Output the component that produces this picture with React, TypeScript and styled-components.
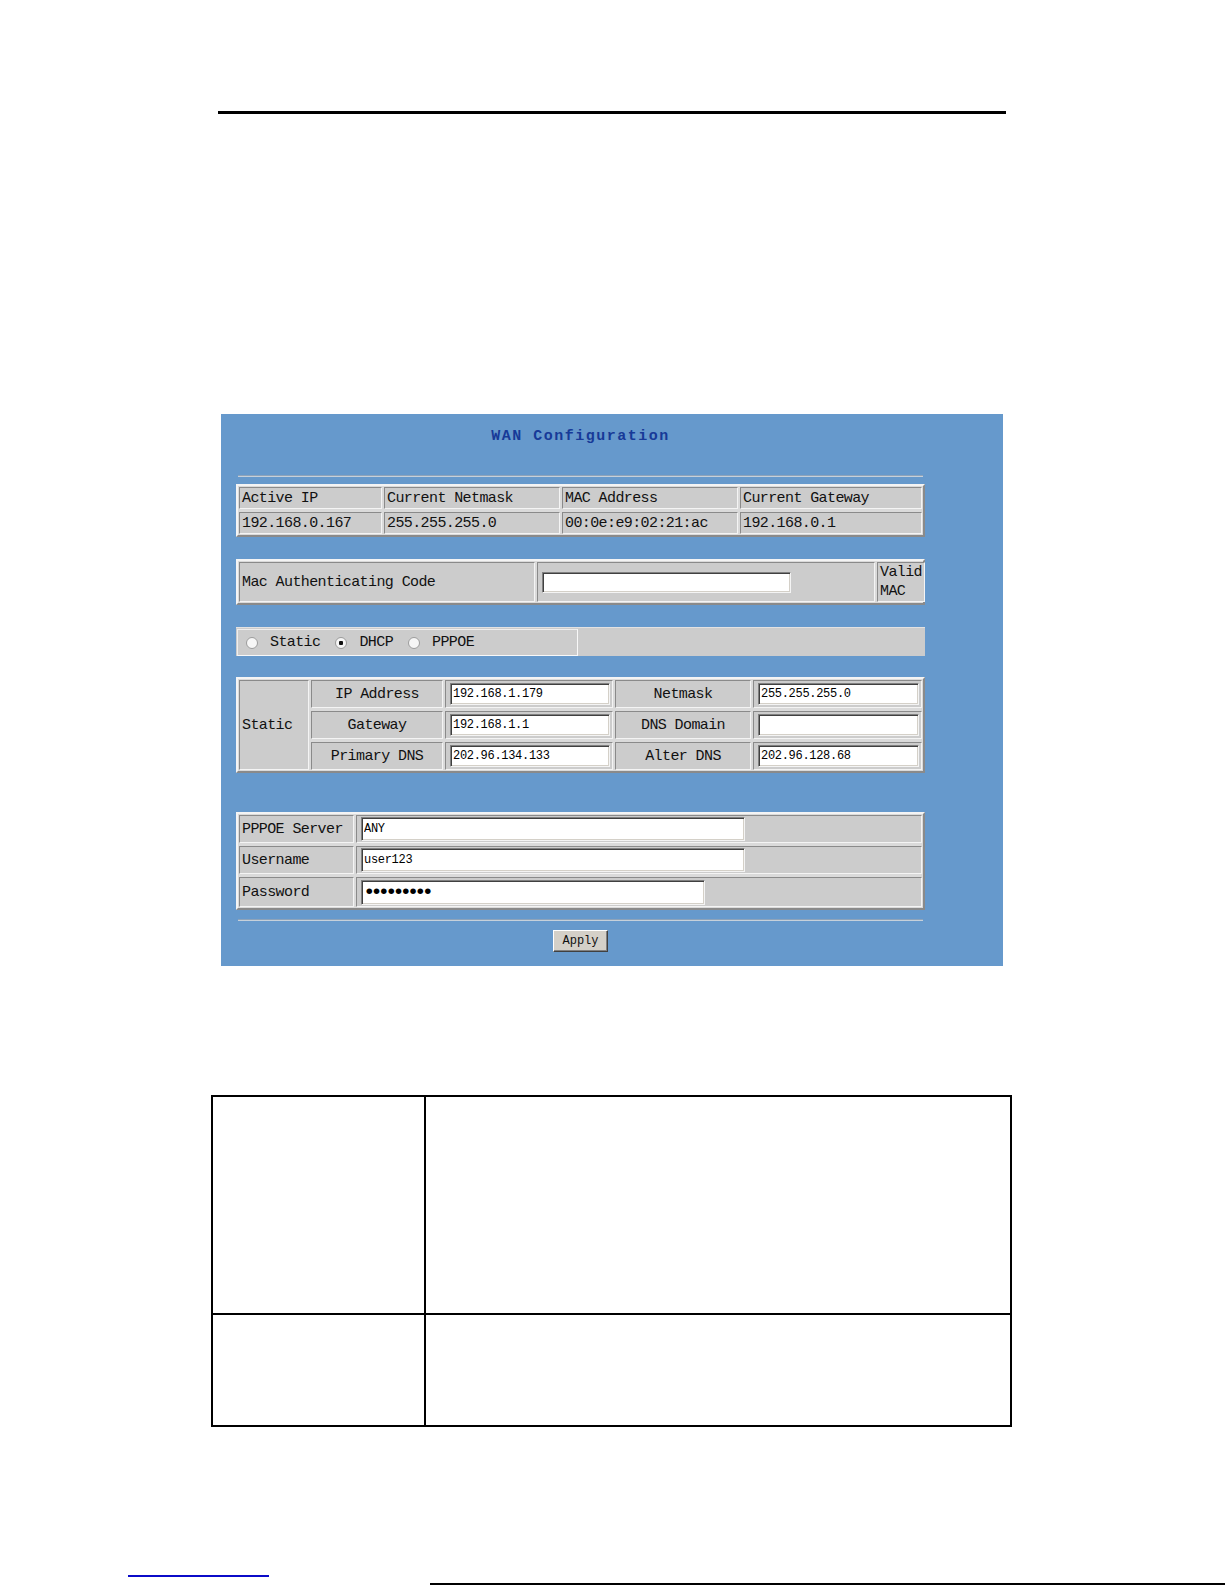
import React, { useState } from 'react';
import styled, { createGlobalStyle, css } from 'styled-components';

const GlobalStyle = createGlobalStyle`
  html, body {
    margin: 0;
    padding: 0;
    background: #ffffff;
  }
  * {
    box-sizing: border-box;
  }
`;

const mono = `"Liberation Mono", "Noto Sans CJK SC", monospace`;

const Page = styled.div`
  width: 1225px;
  height: 1585px;
  overflow: hidden;
  background: #ffffff;
  font-family: ${mono};
  display: flex;
  flex-direction: column;
`;

const HeaderRule = styled.div`
  margin: 111px 0 0 218px;
  width: 788px;
  height: 3px;
  background: #000000;
`;

const Panel = styled.div`
  margin: 300px 0 0 221px;
  width: 782px;
  height: 552px;
  background: #6699cc;
  padding: 13px 0 0 15px;
`;

const Content = styled.div`
  width: 689px;
  display: flex;
  flex-direction: column;
`;

const Title = styled.h2`
  margin: 0;
  height: 20px;
  line-height: 20px;
  text-align: center;
  font-family: ${mono};
  font-size: 15px;
  font-weight: bold;
  letter-spacing: 1.5px;
  color: #173a98;
`;

const Divider = styled.div<{ $top: number }>`
  margin: ${p => p.$top}px 0 0 2px;
  width: 685px;
  height: 2px;
  border-top: 1px solid #8da3ba;
  border-bottom: 1px solid #c6d0da;
`;

// raised frame around every table block
const Frame = styled.div<{ $top: number }>`
  margin-top: ${p => p.$top}px;
  width: 689px;
  display: grid;
  padding: 1px;
  background: #dadada;
  border: 2px solid;
  border-color: #f4f4f4 #8a8a8a #8a8a8a #f4f4f4;
`;

const InfoGrid = styled(Frame)`
  grid-template-columns: 143px 176px 176px 1fr;
  grid-template-rows: 22px 22px;
  gap: 3px 2px;
`;

const MacGrid = styled(Frame)`
  grid-template-columns: 296px 338px 1fr;
  grid-template-rows: 40px;
  gap: 2px;
`;

const StaticGrid = styled(Frame)`
  grid-template-columns: 70px 132px 168px 136px 1fr;
  grid-template-rows: 28px 28px 28px;
  gap: 3px 2px;
`;

const PppoeGrid = styled(Frame)`
  grid-template-columns: 115px 1fr;
  grid-template-rows: 28px 28px 30px;
  gap: 3px 2px;
`;

const Cell = styled.div<{ $align?: 'left' | 'center'; $rows?: number }>`
  background: #cccccc;
  border: 1px solid;
  border-color: #8a8a8a #f4f4f4 #f4f4f4 #8a8a8a;
  display: flex;
  align-items: center;
  justify-content: ${p => (p.$align === 'center' ? 'center' : 'flex-start')};
  padding: 0 2px;
  font-family: ${mono};
  font-size: 15px;
  letter-spacing: -0.6px;
  color: #111111;
  white-space: nowrap;
  ${p =>
    p.$rows &&
    css`
      grid-row: 1 / span ${p.$rows};
    `}
`;

const StackCell = styled(Cell)`
  flex-direction: column;
  align-items: flex-start;
  justify-content: center;
  line-height: 19px;
`;

const TextBox = styled.input<{ $width: number; $height?: number }>`
  width: ${p => p.$width}px;
  height: ${p => p.$height ?? 22}px;
  margin-left: 2px;
  padding: 0 2px;
  background: #ffffff;
  border: 1px solid;
  border-color: #808080 #f4f4f4 #f4f4f4 #808080;
  box-shadow: inset 1px 1px 0 #404040, inset -1px -1px 0 #d4d0c8;
  font-family: ${mono};
  font-size: 12px;
  letter-spacing: -0.3px;
  color: #000000;
  outline: none;
`;

// masked characters drawn as large round dots
const PasswordBox = styled(TextBox)`
  font-size: 21px;
  letter-spacing: -5.3px;
  padding-left: 1px;
`;

const ModeBar = styled.div`
  margin-top: 22px;
  width: 689px;
  height: 29px;
  background: #cccccc;
  border-top: 1px solid #e2e2e2;
  display: flex;
  align-items: stretch;
  padding: 1px 0 0 1px;
`;

const ModeGroup = styled.div`
  width: 341px;
  border: 1px solid;
  border-color: #eeeeee #f8f8f8 #f8f8f8 #eeeeee;
  display: flex;
  align-items: center;
  padding-left: 8px;
  gap: 15px;
`;

const ModeOption = styled.label`
  display: flex;
  align-items: center;
  gap: 12px;
  font-family: ${mono};
  font-size: 15px;
  letter-spacing: -0.6px;
  color: #111111;
`;

const Radio = styled.input`
  appearance: none;
  margin: 0;
  width: 12px;
  height: 12px;
  border-radius: 50%;
  border: 1px solid #9c9c9c;
  background: #f6f6f6;

  &:checked {
    background: radial-gradient(circle, #111111 0 2px, #f6f6f6 2.5px);
  }
`;

const ButtonRow = styled.div`
  margin-top: 9px;
  display: flex;
  justify-content: center;
`;

const ApplyButton = styled.button`
  width: 55px;
  height: 22px;
  padding: 0;
  background: #d4d0c8;
  border: 1px solid;
  border-color: #ffffff #404040 #404040 #ffffff;
  box-shadow: inset -1px -1px 0 #808080;
  font-family: ${mono};
  font-size: 12px;
  color: #111111;
`;

const DocTable = styled.div`
  margin: 129px 0 0 211px;
  width: 801px;
  height: 332px;
  display: grid;
  grid-template-columns: 213px 1fr;
  grid-template-rows: 218px 1fr;
  border: 1px solid #000000;
  border-width: 2px 2px 1px 2px;
`;

const DocCell = styled.div<{ $right?: boolean; $bottom?: boolean }>`
  border-right: ${p => (p.$right ? '0' : '2px solid #000000')};
  border-bottom: ${p => (p.$bottom ? '1px solid #000000' : '2px solid #000000')};
`;

const LinkRule = styled.div`
  margin: 148px 0 0 128px;
  width: 141px;
  height: 2px;
  background: #0b0bc8;
`;

const PageEdge = styled.div`
  margin: 6px 0 0 430px;
  width: 795px;
  height: 2px;
  background: #000000;
`;

const infoHeaders = ['Active IP', 'Current Netmask', 'MAC Address', 'Current Gateway'];
const infoValues = ['192.168.0.167', '255.255.255.0', '00:0e:e9:02:21:ac', '192.168.0.1'];

const staticRows = [
  { left: 'IP Address', leftValue: '192.168.1.179', right: 'Netmask', rightValue: '255.255.255.0' },
  { left: 'Gateway', leftValue: '192.168.1.1', right: 'DNS Domain', rightValue: '' },
  { left: 'Primary DNS', leftValue: '202.96.134.133', right: 'Alter DNS', rightValue: '202.96.128.68' },
];

const modes = ['Static', 'DHCP', 'PPPOE'];

const App: React.FC = () => {
  const [mode, setMode] = useState('DHCP');

  return (
    <>
      <GlobalStyle />
      <Page>
        <HeaderRule />

        <Panel>
          <Content>
            <Title>WAN Configuration</Title>
            <Divider $top={28} />

            <InfoGrid $top={7}>
              {infoHeaders.map(h => (
                <Cell key={h}>{h}</Cell>
              ))}
              {infoValues.map(v => (
                <Cell key={v}>{v}</Cell>
              ))}
            </InfoGrid>

            <MacGrid $top={22}>
              <Cell>Mac Authenticating Code</Cell>
              <Cell>
                <TextBox $width={249} $height={21} defaultValue="" />
              </Cell>
              <StackCell>
                <span>Valid</span>
                <span>MAC</span>
              </StackCell>
            </MacGrid>

            <ModeBar>
              <ModeGroup>
                {modes.map(m => (
                  <ModeOption key={m}>
                    <Radio
                      type="radio"
                      name="wan-mode"
                      checked={mode === m}
                      onChange={() => setMode(m)}
                    />
                    {m}
                  </ModeOption>
                ))}
              </ModeGroup>
            </ModeBar>

            <StaticGrid $top={21}>
              <Cell $rows={3}>Static</Cell>
              {staticRows.map(r => (
                <React.Fragment key={r.left}>
                  <Cell $align="center">{r.left}</Cell>
                  <Cell>
                    <TextBox $width={160} defaultValue={r.leftValue} />
                  </Cell>
                  <Cell $align="center">{r.right}</Cell>
                  <Cell>
                    <TextBox $width={161} defaultValue={r.rightValue} />
                  </Cell>
                </React.Fragment>
              ))}
            </StaticGrid>

            <PppoeGrid $top={39}>
              <Cell>PPPOE Server</Cell>
              <Cell>
                <TextBox $width={384} $height={24} defaultValue="ANY" />
              </Cell>
              <Cell>Username</Cell>
              <Cell>
                <TextBox $width={384} $height={24} defaultValue="user123" />
              </Cell>
              <Cell>Password</Cell>
              <Cell>
                <PasswordBox type="password" $width={344} $height={25} defaultValue="123456789" />
              </Cell>
            </PppoeGrid>

            <Divider $top={9} />

            <ButtonRow>
              <ApplyButton type="button">Apply</ApplyButton>
            </ButtonRow>
          </Content>
        </Panel>

        <DocTable>
          <DocCell />
          <DocCell $right />
          <DocCell $bottom />
          <DocCell $right $bottom />
        </DocTable>

        <LinkRule />
        <PageEdge />
      </Page>
    </>
  );
};

export default App;
